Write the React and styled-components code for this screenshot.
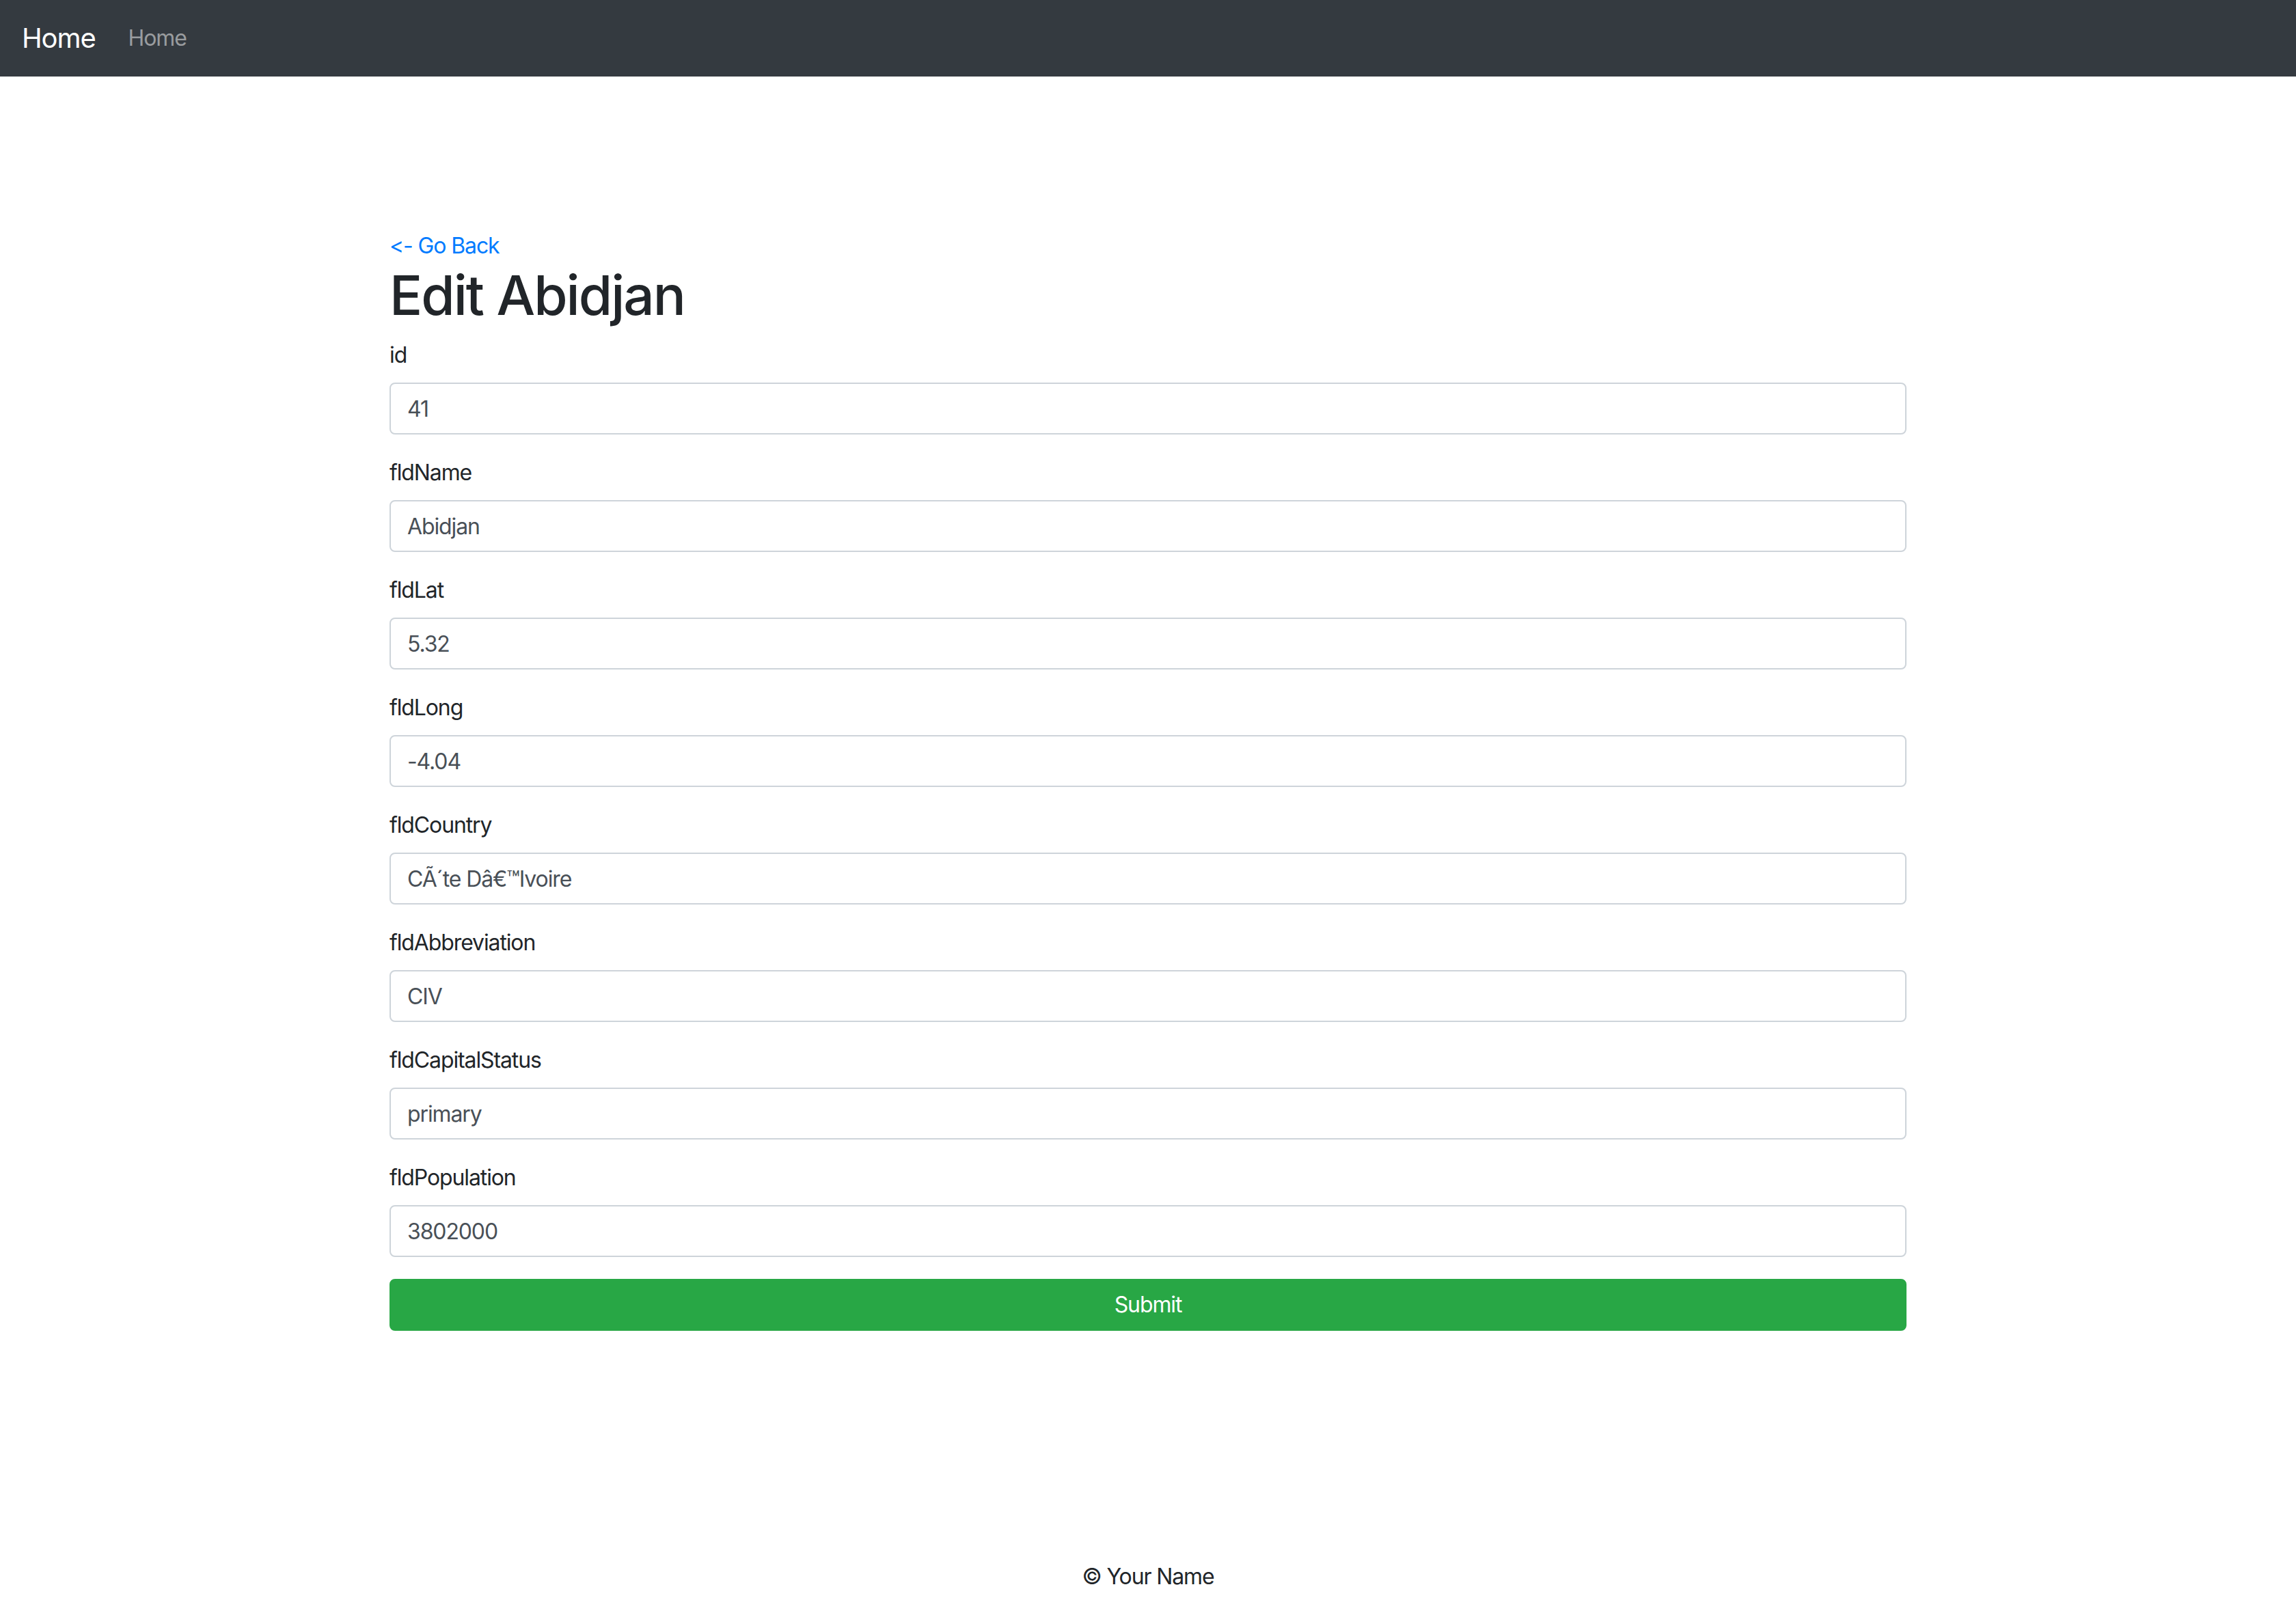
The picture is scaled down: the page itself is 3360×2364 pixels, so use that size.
import React from "react";
import styled, { createGlobalStyle } from "styled-components";

const GlobalStyle = createGlobalStyle`
  *, *::before, *::after {
    box-sizing: border-box;
  }
  body {
    margin: 0;
    font-family: Inter, "Noto Sans", "Liberation Sans", sans-serif;
    font-feature-settings: "calt" 0, "liga" 0;
    font-size: 32px;
    line-height: 1.5;
    letter-spacing: -0.035em;
    color: #212529;
    background: #fff;
  }
`;

const Page = styled.div`
  display: flex;
  flex-direction: column;
  min-height: 100vh;
`;

const Navbar = styled.nav`
  display: flex;
  align-items: center;
  height: 112px;
  padding: 16px 32px;
  background-color: #343a40;
`;

const Brand = styled.a`
  font-size: 40px;
  line-height: 60px;
  padding: 10px 0;
  margin-right: 32px;
  color: #fff;
  text-decoration: none;
`;

const NavLink = styled.a`
  padding: 16px;
  font-size: 32px;
  color: rgba(255, 255, 255, 0.5);
  text-decoration: none;
`;

const Main = styled.main`
  flex: 1;
  padding-top: 224px;
`;

const Container = styled.div`
  width: 100%;
  max-width: 2280px;
  margin: 0 auto;
  padding: 0 30px;
`;

const BackLink = styled.a`
  display: inline-block;
  color: #007bff;
  text-decoration: none;
`;

const Title = styled.h1`
  margin: 0 0 16px;
  font-size: 80px;
  font-weight: 500;
  line-height: 1.2;
  letter-spacing: -0.025em;
`;

const Form = styled.form`
  display: flex;
  flex-direction: column;
`;

const Group = styled.div`
  display: flex;
  flex-direction: column;
  margin-bottom: 32px;
`;

const Label = styled.label`
  margin-bottom: 16px;
`;

const Input = styled.input`
  height: 76px;
  padding: 12px 24px;
  font-family: inherit;
  font-feature-settings: inherit;
  font-size: 32px;
  line-height: 1.5;
  letter-spacing: inherit;
  color: #495057;
  background: #fff;
  border: 2px solid #ced4da;
  border-radius: 8px;
  outline: none;
`;

const SubmitButton = styled.button`
  height: 76px;
  padding: 12px 24px;
  font-family: inherit;
  font-size: 32px;
  line-height: 1.5;
  letter-spacing: inherit;
  color: #fff;
  background-color: #28a745;
  border: 2px solid #28a745;
  border-radius: 8px;
`;

const Footer = styled.footer`
  padding: 32px 0;
  text-align: center;
`;

const fields = [
  ["id", "41"],
  ["fldName", "Abidjan"],
  ["fldLat", "5.32"],
  ["fldLong", "-4.04"],
  ["fldCountry", "CÃ´te Dâ€™Ivoire"],
  ["fldAbbreviation", "CIV"],
  ["fldCapitalStatus", "primary"],
  ["fldPopulation", "3802000"],
];

const App = () => {
  return (
    <Page>
      <GlobalStyle />
      <Navbar>
        <Brand href="#">Home</Brand>
        <NavLink href="#">Home</NavLink>
      </Navbar>
      <Main>
        <Container>
          <BackLink href="#">&lt;- Go Back</BackLink>
          <Title>Edit Abidjan</Title>
          <Form onSubmit={(e) => e.preventDefault()}>
            {fields.map(([name, value]) => (
              <Group key={name}>
                <Label htmlFor={name}>{name}</Label>
                <Input id={name} defaultValue={value} />
              </Group>
            ))}
            <SubmitButton type="submit">Submit</SubmitButton>
          </Form>
        </Container>
      </Main>
      <Footer>© Your Name</Footer>
    </Page>
  );
};

export default App;
